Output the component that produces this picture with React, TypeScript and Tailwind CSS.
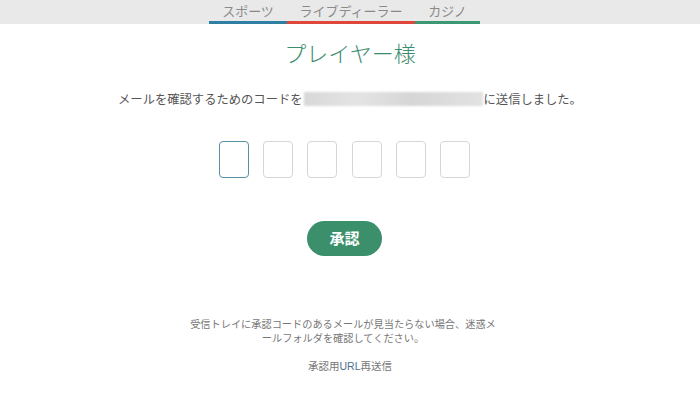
import { useState } from "react";

const tabs = [
  { label: "スポーツ", width: "w-[78px]", bar: "border-[#2f7fa3]" },
  { label: "ライブディーラー", width: "w-[128px]", bar: "border-[#e0463b]" },
  { label: "カジノ", width: "w-[65px]", bar: "border-[#3a9873]" },
];

const jp = "font-['Noto_Sans_CJK_JP',sans-serif]";

export default function App() {
  const [code, setCode] = useState(["", "", "", "", "", ""]);

  return (
    <div className={`min-h-[400px] w-[700px] bg-white ${jp}`}>
      <nav className="flex h-[24px] justify-center bg-[#e9e9e9]">
        <div className="ml-[-11px] flex">
          {tabs.map((tab) => (
            <span
              key={tab.label}
              className={`${tab.width} border-b-[3px] ${tab.bar} pt-[1px] text-center text-[13px] leading-[19px] text-[#8a8a8a]`}
            >
              {tab.label}
            </span>
          ))}
        </div>
      </nav>

      <h1 className="mt-[13px] text-center text-[22px] font-light leading-[30px] text-[#3b8d6c]">
        プレイヤー様
      </h1>

      <p className="mt-[22px] flex items-center justify-center text-[12.3px] leading-[20px] text-[#555]">
        <span>メールを確認するためのコードを</span>
        <span className="mx-[1px] inline-block h-[14px] w-[179px] bg-[linear-gradient(90deg,#d8d8d8,#e4e4e4_30%,#d6d6d6_60%,#e2e2e2)] blur-[1px]" />
        <span>に送信しました。</span>
      </p>

      <div className="mt-[32px] flex justify-center gap-[14.2px] pr-[11px]">
        {code.map((value, i) => (
          <input
            key={i}
            value={value}
            maxLength={1}
            onChange={(e) => {
              const next = [...code];
              next[i] = e.target.value;
              setCode(next);
            }}
            className={`h-[37px] w-[30px] rounded-[4px] border text-center outline-none ${
              i === 0 ? "border-[#5a8fa3]" : "border-[#d6d6d6]"
            }`}
          />
        ))}
      </div>

      <div className="mt-[43px] flex justify-center">
        <button className="ml-[-11px] h-[35px] w-[75px] rounded-full bg-[#3b8f6b] text-[15px] font-bold text-white">
          承認
        </button>
      </div>

      <p className="mt-[61px] pr-[14px] text-center text-[10.2px] leading-[14px] text-[#777]">
        受信トレイに承認コードのあるメールが見当たらない場合、迷惑メ
        <br />
        ールフォルダを確認してください。
      </p>

      <p className="mt-[13px] text-center text-[10.5px] leading-[15px] text-[#777]">
        承認用
        <span className="font-['Liberation_Sans',sans-serif] text-[#4d6f8e]">URL</span>
        再送信
      </p>
    </div>
  );
}
